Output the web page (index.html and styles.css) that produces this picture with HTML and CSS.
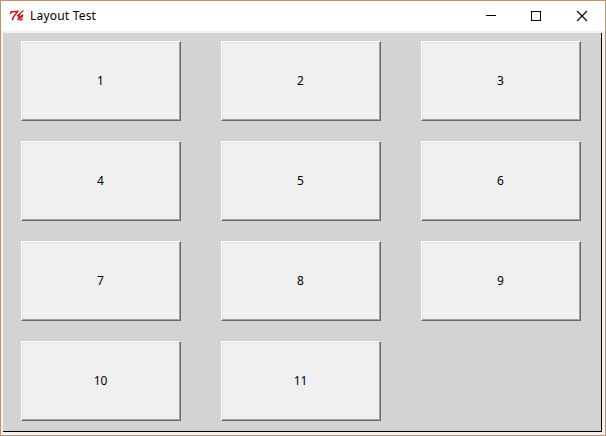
FILE: index.html
```html
<!DOCTYPE html>
<html lang="en">
<head>
<meta charset="utf-8">
<title>Layout Test</title>
<link rel="stylesheet" href="styles.css">
</head>
<body>
<div class="window">
  <header class="titlebar">
    <svg class="logo" width="16" height="14" viewBox="0 0 16 14" fill="none" stroke="#cc1820">
      <path d="M1.2 4.8 2.3 2.8 8.6 2.4 7.2 4.6 4.6 7.6 3.2 11.3" stroke-width="1.6"/>
      <path d="M14.5 1.6C11.8 2.5 10 6 8.8 11.3M8.2 7.2 11 4.5M9.6 9.2 14 5.6M11 8.3 11.2 11 13.8 10.2M13.8 6 12.6 9" stroke-width="1.4"/>
    </svg>
    <h1 class="title">Layout Test</h1>
    <svg class="controls" width="104" height="12" viewBox="0 0 104 12" fill="none" stroke="#000">
      <path d="M0 5.5H10M45.5 1.5H54.5V10.5H45.5Z" shape-rendering="crispEdges"/>
      <path d="M91 1 101 11M101 1 91 11" stroke-width="1.1"/>
    </svg>
  </header>
  <main class="canvas">
    <button>1</button><button>2</button><button>3</button>
    <button>4</button><button>5</button><button>6</button>
    <button>7</button><button>8</button><button>9</button>
    <button>10</button><button>11</button>
  </main>
</div>
</body>
</html>
```
FILE: styles.css
```css
* {
  box-sizing: border-box;
}

body {
  margin: 0;
}

.window {
  display: flex;
  flex-direction: column;
  width: 606px;
  height: 436px;
  border: 1px solid #c4906b;
  background: #f4f2f0;
  font-family: "Noto Sans", "Open Sans", sans-serif;
  color: #000;
}

.titlebar {
  display: flex;
  align-items: center;
  height: 30px;
  padding: 0 5px 0 8px;
  background: #fff;
}

.logo {
  margin-right: 5px;
}

.title {
  flex: 1;
  margin: 0;
  font-size: 12px;
  font-weight: 400;
  line-height: 16px;
  letter-spacing: 0.2px;
}

.controls {
  margin-right: 10px;
}

.canvas {
  display: grid;
  grid-template-columns: repeat(3, 160px);
  grid-auto-rows: 80px;
  gap: 20px 40px;
  width: 599px;
  height: 399px;
  margin: 2px 0 0 2px;
  padding: 8px 0 0 18px;
  border: solid #000;
  border-width: 0 1px 1px 0;
  background: #d3d3d3;
}

button {
  padding: 0 1px 2px 0;
  border: 1px solid;
  border-color: #fff #696969 #696969 #fff;
  background: #f0f0f0;
  box-shadow: inset -1px -1px #a0a0a0, inset 1px 1px #e3e3e3;
  font: 12px "Noto Sans", "Open Sans", sans-serif;
  color: #000;
}
```
